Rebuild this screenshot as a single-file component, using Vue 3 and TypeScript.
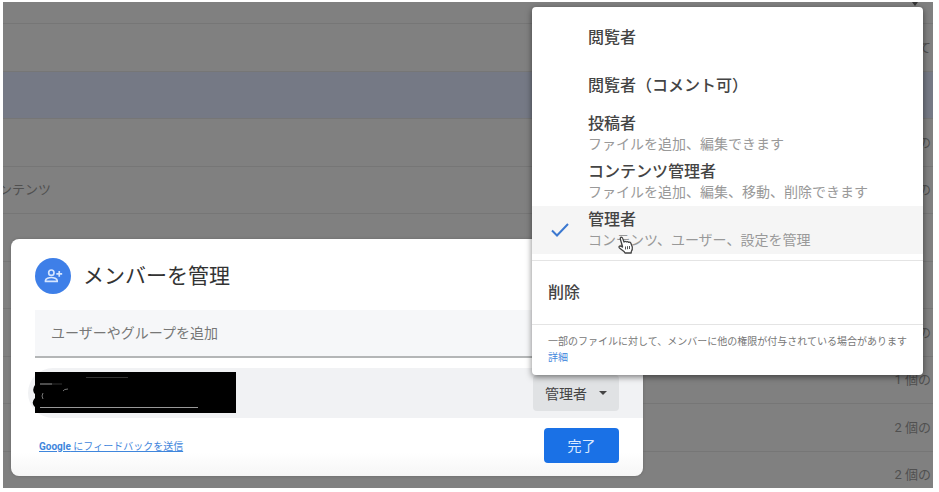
<script setup lang="ts">
import { ref } from 'vue'

interface Role {
  id: string
  name: string
  note?: string
}

interface FileRow {
  name?: string
  count?: string
  selected?: boolean
}

const rows: FileRow[] = [
  { count: 'て' },
  { selected: true },
  { count: 'の' },
  { name: 'コンテンツ', count: 'の' },
  {},
  {},
  { count: 'の' },
  { count: '1 個の' },
  { count: '2 個の' },
  { count: '2 個の' },
]

const roles: Role[] = [
  { id: 'viewer', name: '閲覧者' },
  { id: 'commenter', name: '閲覧者（コメント可）' },
  { id: 'contributor', name: '投稿者', note: 'ファイルを追加、編集できます' },
  { id: 'content', name: 'コンテンツ管理者', note: 'ファイルを追加、編集、移動、削除できます' },
  { id: 'manager', name: '管理者', note: 'コンテンツ、ユーザー、設定を管理' },
]

const current = ref('manager')
const invite = ref('')
</script>

<template>
  <main class="screen">
    <div class="files">
      <div class="head">
        <svg viewBox="0 0 6 4" width="6" height="4"><path d="M0 0h6L3 4z" fill="#333" /></svg>
      </div>
      <div v-for="(row, i) in rows" :key="i" class="file" :class="{ selected: row.selected }">
        <span class="name">{{ row.name }}</span>
        <span class="count">{{ row.count }}</span>
      </div>
    </div>

    <section class="dialog">
      <header class="title">
        <span class="badge">
          <svg viewBox="0 0 24 24" width="20" height="20" fill="none" stroke="#d6e6ff" stroke-width="2">
            <circle cx="10" cy="8" r="3.2" />
            <path d="M3 18.5v-1.2c0-2.3 4.2-3.5 7-3.5s7 1.200 7 3.500v1.200z" />
            <path d="M19.500 6v7M16 9.500h7" />
          </svg>
        </span>
        <h1>メンバーを管理</h1>
      </header>
      <input v-model="invite" class="invite" type="text" aria-label="ユーザーやグループを追加" placeholder="ユーザーやグループを追加" />
      <div class="member">
        <svg class="redacted" viewBox="0 0 204 41" width="204" height="41">
          <path d="M3 0h201v41H3z" />
          <path d="M3 13q-3 4-1 8l1 1zM3 26q-4 4-1 8l1 1z" />
          <path d="M8 12h12M8 35.500h158" stroke="#999" />
          <path d="M20 12h10M54 5.500h42" stroke="#333" />
          <path d="M11 21q-2 3 0 6M31 19q1-2 5-2" stroke="#777" fill="none" />
        </svg>
        <button class="role" type="button">管理者<i class="caret"></i></button>
      </div>
      <footer class="actions">
        <a href="#"><b>Google</b> にフィードバックを送信</a>
        <button class="done" type="button">完了</button>
      </footer>
    </section>

    <div class="menu">
      <div class="roles">
        <button v-for="role in roles" :key="role.id" type="button" class="option" :class="{ active: role.id === current }" @click="current = role.id">
          <span class="tick">
            <svg v-if="role.id === current" viewBox="0 0 20 16" width="20" height="16" fill="none" stroke="#3b78d0" stroke-width="2">
              <path d="M2 8.500l5 5L18 2" />
            </svg>
          </span>
          <span class="label">
            <span class="role-name">{{ role.name }}</span>
            <small v-if="role.note">{{ role.note }}</small>
          </span>
        </button>
      </div>
      <button class="remove" type="button">削除</button>
      <p class="hint">一部のファイルに対して、メンバーに他の権限が付与されている場合があります<br /><a href="#">詳細</a></p>
      <svg class="pointer" viewBox="0 0 16 18" width="16" height="18">
        <path d="M4.500 10.500L2.300 3q-.3-1.700 1-1.800 1 0 1.400 1.200L6 6q1.200-1.200 2.300-.1 1.400-.8 2.300.4 1.500-.6 2.200.8l1.500 4q.4 2.400-1 4.400l-.1 1.500H7l-1-1.600-4.600-3.500q-1-1.300.3-1.800 1.400-.2 2.800 1z" fill="#fff" stroke="#444" stroke-width="1.300" stroke-linejoin="round" />
        <path d="M7.500 10.500v3M9.500 10.200v3M11.500 10v3" stroke="#555" />
      </svg>
    </div>
  </main>
</template>

<style>
body {
  background: #fff;
}
</style>

<style scoped>
* {
  box-sizing: border-box;
}

.screen {
  position: relative;
  height: calc(100vh - 6px);
  margin: 2px 6px 4px 3px;
  overflow: hidden;
  background: #808080;
  color: #444;
  font-family: Roboto, "Noto Sans CJK JP", sans-serif;
}

button,
input {
  border: 0;
  font: inherit;
  color: inherit;
}

a {
  color: #3f86dc;
}

.head {
  display: flex;
  justify-content: flex-end;
  height: 22px;
  padding-right: 15px;
  border-bottom: 1px solid #767676;
}

.file {
  display: flex;
  justify-content: space-between;
  align-items: center;
  height: 47px;
  padding: 0 2px 3px 0;
  border-bottom: 1px solid #767676;
  color: #505050;
  font-size: 13px;
  white-space: nowrap;
}

.file:nth-child(even) {
  height: 48px;
}

.file.selected {
  background: #757985;
}

.name {
  display: flex;
  justify-content: flex-end;
  width: 48px;
}

.dialog {
  position: absolute;
  left: 8px;
  right: 290px;
  bottom: 12px;
  padding: 19px 0 13px;
  border-radius: 8px;
  background: linear-gradient(#fff 90%, #f6f6f6);
  box-shadow: 0 0 3px #666;
}

.title {
  display: flex;
  align-items: center;
  gap: 12px;
  height: 36px;
  padding: 0 24px;
}

.badge {
  display: flex;
  align-items: center;
  justify-content: center;
  width: 36px;
  height: 36px;
  border-radius: 50%;
  background: #3e7fe8;
}

h1 {
  margin: 0;
  font-size: 21px;
  font-weight: 400;
  line-height: 32px;
  color: #333;
}

.invite {
  display: block;
  width: calc(100% - 48px);
  height: 48px;
  margin: 16px 24px 10px;
  padding: 0 16px;
  border-bottom: 2px solid #b4b6b7;
  background: #f6f7f9;
  font-size: 14px;
}

.invite::placeholder {
  color: #777;
  opacity: 1;
}

.member {
  display: flex;
  align-items: center;
  justify-content: space-between;
  height: 50px;
  margin-left: 17px;
  padding: 0 24px 0 4px;
  border-radius: 25px 0 0 25px;
  background: #f1f2f4;
}

.redacted {
  margin-bottom: 2px;
}

.role {
  display: flex;
  align-items: center;
  gap: 12px;
  height: 36px;
  padding: 0 12px;
  border-radius: 4px;
  background: #e0e2e4;
  font-size: 14px;
}

.caret {
  border: 4px solid transparent;
  border-top-color: #444;
  border-bottom: 0;
}

.actions {
  display: flex;
  align-items: center;
  justify-content: space-between;
  margin-top: 10px;
  padding: 0 24px 0 28px;
  font-size: 10px;
}

.done {
  width: 75px;
  height: 35px;
  padding: 0 0 2px;
  border-radius: 4px;
  background: #1a71e6;
  color: #d9e9ff;
  font-size: 14px;
}

.menu {
  position: absolute;
  top: 5px;
  right: 10px;
  width: 391px;
  border-radius: 4px;
  background: #fff;
  box-shadow: 0 2px 6px rgba(0, 0, 0, 0.5);
}

.roles {
  padding: 7px 0 6px;
  border-bottom: 1px solid #e4e4e4;
}

.option {
  display: flex;
  align-items: center;
  width: 100%;
  height: 48px;
  padding: 0;
  background: none;
  text-align: left;
  font-size: 16px;
  line-height: 20px;
}

.option.active {
  background: #f5f5f5;
}

.tick {
  display: flex;
  justify-content: center;
  width: 56px;
}

.label {
  display: flex;
  flex-direction: column;
}

.role-name {
  font-weight: 500;
}

small {
  color: #999;
  font-size: 14px;
}

.remove {
  display: block;
  width: 100%;
  height: 64px;
  padding: 0 16px 4px;
  border-bottom: 1px solid #e4e4e4;
  background: none;
  text-align: left;
  font-size: 16px;
  font-weight: 500;
}

.hint {
  margin: 0;
  padding: 9px 16px 9px;
  color: #777;
  font-size: 10px;
  line-height: 16px;
  white-space: nowrap;
}

.hint a {
  text-decoration: none;
}

.pointer {
  position: absolute;
  top: 229px;
  left: 86px;
}
</style>
